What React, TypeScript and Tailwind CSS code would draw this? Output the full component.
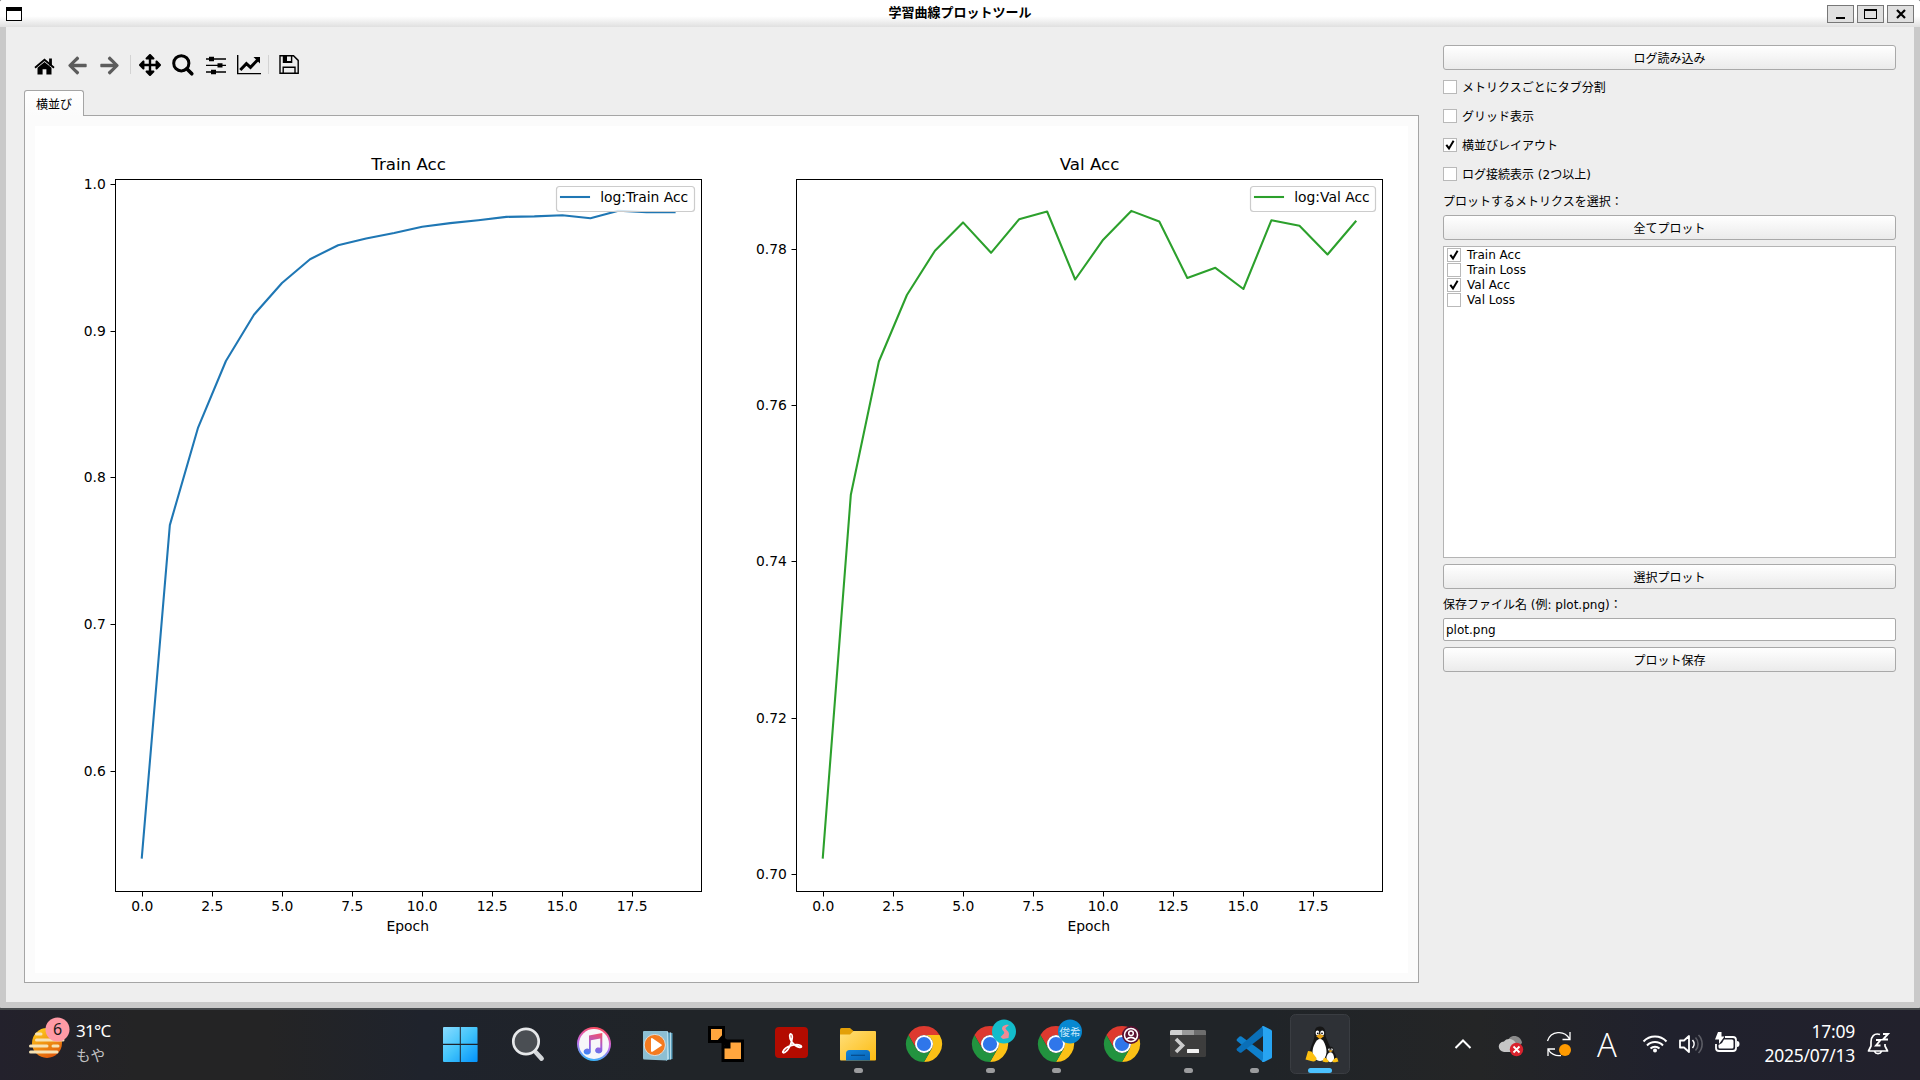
import React from "react";
import { FaArrowLeft, FaArrowRight, FaArrowsAlt } from "react-icons/fa";

const BUTTON =
  "flex h-[25px] w-full shrink-0 items-center justify-center rounded-[3px] border border-[#a9a9a9] bg-linear-to-b from-white to-[#ebebeb] pt-[2px] text-[12px] leading-none text-black";

function Check() {
  return (
    <svg width="12" height="12" viewBox="0 0 12 12" fill="none" stroke="#000" strokeWidth="2">
      <path d="M2.3 5.8 L5 9.4 L9.6 1.8" />
    </svg>
  );
}

function CheckBox({ checked }: { checked?: boolean }) {
  return (
    <span className="flex size-[14px] shrink-0 items-center justify-center border border-[#b9b9b9] bg-white">
      {checked && <Check />}
    </span>
  );
}

function Option({ label, checked }: { label: string; checked?: boolean }) {
  return (
    <label className="flex h-[29px] items-center gap-[5px]">
      <span className="pb-px">
        <CheckBox checked={checked} />
      </span>
      <span className="pt-px leading-none">{label}</span>
    </label>
  );
}

function TitleBar() {
  const btn = "flex h-[18px] w-[27px] items-center justify-center border border-[#777] bg-[#e0e0e0]";
  return (
    <header className="flex h-[27px] shrink-0 items-start bg-linear-to-b from-white from-60% to-[#e0e0e0] pl-[6px] pr-[6px]">
      <div className="w-[87px] pt-[7px]">
        <div className="h-[14px] w-[16px] border border-t-4 border-black bg-white" />
      </div>
      <h1 className="flex-1 pt-[6px] text-center text-[13px] font-bold leading-[14px]">学習曲線プロットツール</h1>
      <div className="flex gap-[3px] pt-[5px]">
        <div className={btn}>
          <div className="mt-[8px] h-[2px] w-[9px] bg-black" />
        </div>
        <div className={btn}>
          <div className="h-[10px] w-[13px] border border-t-2 border-black" />
        </div>
        <div className={btn}>
          <svg width="10" height="10" viewBox="0 0 10 10" stroke="#000" strokeWidth="2.2">
            <path d="M1 1 L9 9 M9 1 L1 9" />
          </svg>
        </div>
      </div>
    </header>
  );
}

function ToolCell({ children }: { children: React.ReactNode }) {
  return <span className="flex h-[26px] w-[33px] items-center justify-center">{children}</span>;
}

function Toolbar() {
  return (
    <div className="flex h-[26px] pl-[4px] text-black">
      <ToolCell>
        <svg width="22" height="24" viewBox="0.5 -0.5 22 24">
          <path d="M1.5 14.2 L11 6.3 L20.5 14.2" fill="none" stroke="#000" strokeWidth="1.9" />
          <path d="M15.6 5 H18.4 V12 H15.6 Z" />
          <path d="M4 14.3 L11 8.5 L18 14.3 V21 H12.9 V15.8 H9.1 V21 H4 Z" />
        </svg>
      </ToolCell>
      <ToolCell>
        <FaArrowLeft className="size-[21px] text-[#5c5c5c]" />
      </ToolCell>
      <ToolCell>
        <FaArrowRight className="mr-[2px] size-[21px] text-[#5c5c5c]" />
      </ToolCell>
      <span className="ml-[3px] mr-[2px] mt-[3px] h-[19px] w-px bg-[#d3d3d3]" />
      <ToolCell>
        <FaArrowsAlt className="size-[22px]" />
      </ToolCell>
      <ToolCell>
        <svg width="24" height="24" viewBox="0 0 24 24" fill="none" stroke="#000">
          <circle cx="10.3" cy="10.3" r="7.6" strokeWidth="3" />
          <path d="M15.8 15.8 L20.8 20.8" strokeWidth="3.6" strokeLinecap="round" />
        </svg>
      </ToolCell>
      <ToolCell>
        <svg width="24" height="24" viewBox="0 0 24 24">
          <path d="M2 6 H22 M2 12.4 H22 M2 19 H22" stroke="#000" strokeWidth="1.4" />
          <path d="M5 3.8 H10 V8.2 H5 Z M13.5 10.2 H18.5 V14.6 H13.5 Z M7 16.8 H12 V21.2 H7 Z" />
        </svg>
      </ToolCell>
      <ToolCell>
        <svg width="26" height="24" viewBox="0 0 26 24">
          <path d="M1.7 2 V20.6 H25" fill="none" stroke="#000" strokeWidth="1.4" />
          <path d="M4.3 17 L10.4 10.6 L14.5 14.3 L21.6 7" fill="none" stroke="#000" strokeWidth="3" />
          <path d="M17.5 4 H24 V10.6 Z" />
        </svg>
      </ToolCell>
      <span className="ml-[3px] mr-[3px] mt-[3px] h-[19px] w-px bg-[#d3d3d3]" />
      <ToolCell>
        <svg width="22" height="24" viewBox="0 0 22 24" fill="none" stroke="#000" strokeWidth="1.4">
          <path d="M2 2.7 H15.5 L20.2 7.4 V20.3 H2 Z" />
          <path d="M5.5 2.7 V9.4 H13.6 V2.7" />
          <path d="M5.6 3 H9 V8 H13 V9.2 H5.6 Z" fill="#000" stroke="none" />
          <path d="M5.2 20 V14.2 H17 V20" />
        </svg>
      </ToolCell>
    </div>
  );
}

type Plot = {
  title: string;
  left: number;
  color: string;
  ys: number[];
  ticks: [string, number][];
  legendX: number;
};

const PLOTS: Plot[] = [
  {
    title: "Train Acc",
    left: 115.5,
    color: "#1f77b4",
    ys: [857.6, 525.1, 428.2, 361, 314.7, 283, 259.2, 245.2, 238.4, 232.9, 226.7, 223.1, 220.2, 216.9, 216.4, 215.2, 218.2, 210.7, 212.3, 212.3],
    ticks: [["1.0", 184.5], ["0.9", 331.5], ["0.8", 477.5], ["0.7", 624.5], ["0.6", 771.5]],
    legendX: 556.5,
  },
  {
    title: "Val Acc",
    left: 796.5,
    color: "#2ca02c",
    ys: [857.6, 494.7, 361.5, 295, 250.7, 222.4, 252.8, 219.3, 211.5, 279.5, 239.7, 210.9, 221.5, 278, 267.8, 289, 220.2, 225.7, 254.5, 221.5],
    ticks: [["0.78", 249.5], ["0.76", 405.5], ["0.74", 561.5], ["0.72", 718.5], ["0.70", 874.5]],
    legendX: 1250.5,
  },
];

const X_TICKS = ["0.0", "2.5", "5.0", "7.5", "10.0", "12.5", "15.0", "17.5"];
const STEP = 28.04;

function Axes({ p }: { p: Plot }) {
  const x0 = p.left + 26.3;
  const right = p.left + 586;
  return (
    <g>
      <text x={p.left + 293} y="170" fontSize="16.67" textAnchor="middle">{p.title}</text>
      {p.ticks.map(([t, y]) => (
        <g key={t}>
          <path d={`M${p.left - 5} ${y} H${p.left}`} stroke="#000" />
          <text x={p.left - 9.7} y={y + 4.5} fontSize="13.89" textAnchor="end">{t}</text>
        </g>
      ))}
      {X_TICKS.map((t, i) => {
        const x = Math.floor(x0 + i * 2.5 * STEP + 0.25) + 0.5;
        return (
          <g key={t}>
            <path d={`M${x} 891.5 V896.5`} stroke="#000" />
            <text x={x - 0.3} y="911" fontSize="13.89" textAnchor="middle">{t}</text>
          </g>
        );
      })}
      <text x={p.left + 292.2} y="931" fontSize="13.89" textAnchor="middle">Epoch</text>
      <polyline
        points={p.ys.map((y, i) => `${x0 + i * STEP},${y}`).join(" ")}
        fill="none"
        stroke={p.color}
        strokeWidth="2.08"
        strokeLinecap="square"
        strokeLinejoin="round"
      />
      <rect x={p.left} y="179.5" width="586" height="712" fill="none" stroke="#000" />
      <rect x={p.legendX} y="186.5" width={right - 7 - p.legendX} height="25" rx="3" fill="#fff" fillOpacity="0.8" stroke="#ccc" strokeWidth="1.2" />
      <path d={`M${p.legendX + 4.5} 197 h28`} stroke={p.color} strokeWidth="2.08" strokeLinecap="square" />
      <text x={p.legendX + 43.7} y="202" fontSize="13.89">{`log:${p.title}`}</text>
    </g>
  );
}

function Figure() {
  return (
    <svg className="block bg-white font-['DejaVu_Sans',sans-serif]" width="1373" height="847" viewBox="35 126 1373 847">
      {PLOTS.map((p) => (
        <Axes key={p.title} p={p} />
      ))}
    </svg>
  );
}

const METRICS: [string, boolean][] = [
  ["Train Acc", true],
  ["Train Loss", false],
  ["Val Acc", true],
  ["Val Loss", false],
];

function SidePanel() {
  return (
    <aside className="flex w-[453px] flex-col pt-[18px] text-[12px] text-black">
      <button className={BUTTON}>ログ読み込み</button>
      <div className="mt-[3px] flex flex-col">
        <Option label="メトリクスごとにタブ分割" />
        <Option label="グリッド表示" />
        <Option label="横並びレイアウト" checked />
        <Option label="ログ接続表示 (2つ以上)" />
      </div>
      <div className="mt-[2px] flex h-[20px] items-center pt-px leading-none">プロットするメトリクスを選択：</div>
      <button className={`${BUTTON} mt-[4px]`}>全てプロット</button>
      <ul className="mt-[6px] h-[312px] border border-[#b4b4b4] bg-white pl-[3px]">
        {METRICS.map(([m, on]) => (
          <li key={m} className="flex h-[15px] items-center gap-[6px] leading-none">
            <CheckBox checked={on} />
            <span className="pt-px">{m}</span>
          </li>
        ))}
      </ul>
      <button className={`${BUTTON} mt-[6px]`}>選択プロット</button>
      <div className="mt-[4px] flex h-[22px] items-center pt-px leading-none">保存ファイル名 (例: plot.png)：</div>
      <div className="mt-[3px] flex h-[23px] items-center rounded-[2px] border border-[#a9a9a9] bg-white pl-[2px] leading-none">plot.png</div>
      <button className={`${BUTTON} mt-[6px]`}>プロット保存</button>
    </aside>
  );
}

function Dock({ children, state }: { children: React.ReactNode; state?: "open" | "active" }) {
  return (
    <svg className="shrink-0" width="66" height="70" viewBox="-33 -34 66 70">
      {state === "active" && <rect x="-29.5" y="-29.5" width="59" height="59" rx="5" fill="#2e3136" stroke="#3a3d42" />}
      {children}
      {state === "open" && <rect x="-4" y="24" width="9" height="5" rx="2.5" fill="#9b9c9e" />}
      {state === "active" && <rect x="-12" y="24" width="24" height="5" rx="2.5" fill="#4cc2ff" />}
    </svg>
  );
}

function Chrome() {
  return (
    <g>
      <path d="M-15.59 -9 A18 18 0 0 1 15.59 -9 L0 -9 A9 9 0 0 0 -7.79 4.5 Z" fill="#de3a2f" />
      <path d="M15.59 -9 A18 18 0 0 1 0 18 L7.79 4.5 A9 9 0 0 0 0 -9 Z" fill="#fbc116" />
      <path d="M0 18 A18 18 0 0 1 -15.59 -9 L-7.79 4.5 A9 9 0 0 0 7.79 4.5 Z" fill="#22933f" />
      <circle r="9" fill="#fff" />
      <circle r="7.1" fill="#2f76ea" />
    </g>
  );
}

function Penguin() {
  return (
    <g>
      <path d="M0 -17.5 C5 -17.5 5.5 -13 5.5 -9 C6 -4 11 1 11 9 C11 15 7 17 1 17 C-5 17 -10 15 -10 9 C-10 2 -5.5 -3 -5.5 -9 C-5.5 -14 -5 -17.5 0 -17.5 Z" fill="#161616" />
      <path d="M0 -5 C4 -5 6.5 3 6.5 8 C6.5 14 4 17 0 17 C-4 17 -7.5 13 -7.5 8 C-7.5 3 -4 -5 0 -5 Z" fill="#fff" />
      <ellipse cx="-2.6" cy="-11" rx="1.8" ry="2.4" fill="#fff" />
      <ellipse cx="2.2" cy="-11" rx="2" ry="2.5" fill="#fff" />
      <circle cx="-2.2" cy="-10.7" r="0.9" fill="#111" />
      <circle cx="2" cy="-10.7" r="0.9" fill="#111" />
      <path d="M-4 -8 L0 -10 L4.2 -8 L0 -4.8 Z" fill="#e8a317" />
      <path d="M-12 7 L-8.5 7.5 L-3.5 14 C-3 17 -6 18 -9 17 L-14.5 15.5 Z" fill="#fdc010" />
    </g>
  );
}

function Terminal() {
  return (
    <g>
      <rect x="-18" y="-14" width="36" height="27" rx="1.5" fill="#3d3d3d" />
      <path d="M-18 -9 V-12.5 Q-18 -14 -16.5 -14 H-6 V-9 Z" fill="#cfcfcf" />
      <rect x="-6" y="-14" width="12" height="5" fill="#9a9a9a" />
      <path d="M6 -14 H16.5 Q18 -14 18 -12.5 V-9 H6 Z" fill="#6d6d6d" />
      <path d="M-12 -5 L-5.5 1.5 L-12 8" fill="none" stroke="#ccc" strokeWidth="3.6" />
      <rect x="-1" y="5" width="12" height="4" rx="0.5" fill="#f2f2f2" />
    </g>
  );
}

function DockIcons() {
  return (
    <div className="flex">
      <Dock>
        <defs>
          <linearGradient id="win" gradientUnits="userSpaceOnUse" x1="-18" y1="-17" x2="16" y2="18">
            <stop offset="0" stopColor="#8adcff" />
            <stop offset="0.5" stopColor="#42c4fb" />
            <stop offset="1" stopColor="#0493fb" />
          </linearGradient>
        </defs>
        <path
          transform="translate(-1 0)"
          d="M-18 -16 q0 -1 1 -1 H-1.2 V-.3 H-18 Z M-.2 -17 H15.5 q1 0 1 1 V-.3 H-.2 Z M-18 .9 H-1.2 V18 H-17 q-1 0 -1 -1 Z M-.2 .9 H16.6 V17 q0 1 -1 1 H-.2 Z"
          fill="url(#win)"
        />
      </Dock>
      <Dock>
        <path d="M8 8.5 L13.6 14.6" stroke="#d4d7da" strokeWidth="4.6" strokeLinecap="round" />
        <circle cx="-2" cy="-2.5" r="12.7" fill="#4a4e53" stroke="#e6e8ea" strokeWidth="2.7" />
      </Dock>
      <Dock>
        <defs>
          <linearGradient id="ring" x1="0.6" y1="0" x2="0.4" y2="1">
            <stop offset="0" stopColor="#fb4b5c" />
            <stop offset="0.5" stopColor="#c86be8" />
            <stop offset="1" stopColor="#35b6fa" />
          </linearGradient>
          <linearGradient id="note" gradientUnits="userSpaceOnUse" x1="4" y1="-11" x2="-3" y2="11">
            <stop offset="0" stopColor="#f2506c" />
            <stop offset="0.55" stopColor="#a45bd8" />
            <stop offset="1" stopColor="#3f86f5" />
          </linearGradient>
        </defs>
        <circle r="17" fill="url(#ring)" />
        <circle r="15" fill="#f7f7f9" />
        <path
          d="M-5 -8.5 L8.3 -11 V6.5 A3.6 3 0 1 1 6.3 3.7 V-5.5 L-3.2 -3.7 V8 A3.6 3 0 1 1 -5 5 Z"
          fill="url(#note)"
        />
      </Dock>
      <Dock>
        <path d="M6 -12 L12.5 -11 V15 L6 16.5 Z" fill="#5c9fbd" />
        <path d="M6 -12.7 H8 L9 15 L6 16.5 Z M10 -11.5 H11 V15.5 H10 Z" fill="#b5dcea" />
        <path d="M-17 -12 Q-17 -13 -16 -13 H7 V16.5 L-16 15.5 Q-17 15.5 -17 14 Z" fill="#8dbfd3" />
        <circle cx="-5.2" cy="1" r="10.6" fill="#f47b20" stroke="#d8dfe0" strokeWidth="1" />
        <path d="M-9 -5 Q-9 -6.5 -7.5 -5.8 L1.5 0.4 Q2.2 1 1.5 1.7 L-7.5 7.7 Q-9 8.2 -9 7 Z" fill="#fff" />
      </Dock>
      <Dock>
        <rect x="-16.5" y="-16.5" width="14" height="14" fill="#ffa63e" stroke="#000" strokeWidth="3" />
        <rect x="-3" y="-3" width="19.5" height="19.5" fill="#ffa63e" stroke="#000" strokeWidth="3" />
        <path d="M-6 -6.5 L1.5 0.5" stroke="#000" strokeWidth="6" />
        <path d="M4.5 -4 V4.5 H-4.5 Z" />
      </Dock>
      <Dock>
        <rect x="-17" y="-17" width="33" height="31" rx="4" fill="#b30b00" />
        <path
          d="M-9 7.5 C-7 2.5 4 -1 8.5 1.5 C12 4 5 5 -.5 -2.5 C-3 -6.5 -2.5 -10.5 -1 -10 C2 -9 -1 3 -5.5 7 C-7.5 9.5 -10 9 -9 7.5 Z"
          fill="none"
          stroke="#fff"
          strokeWidth="1.8"
        />
      </Dock>
      <Dock state="open">
        <defs>
          <linearGradient id="folder" x1="0" y1="0" x2="1" y2="1">
            <stop offset="0" stopColor="#ffdf7a" />
            <stop offset="1" stopColor="#fdbb10" />
          </linearGradient>
          <linearGradient id="drawer" x1="0" y1="0" x2="1" y2="1">
            <stop offset="0" stopColor="#1485dc" />
            <stop offset="1" stopColor="#0662b4" />
          </linearGradient>
        </defs>
        <path d="M-18 -14.5 Q-18 -16 -16.5 -16 H-8 L-4 -12.5 V-7 H-18 Z" fill="#e3a008" />
        <path d="M-18 -9.5 H-8 L-4.5 -13 H17 Q18 -13 18 -12 V15.5 Q18 16.5 17 16.5 H-17 Q-18 16.5 -18 15.5 Z" fill="url(#folder)" />
        <path d="M-12 16.5 V9.5 Q-12 6 -8.5 6 H8.5 Q12 6 12 9.5 V16.5 Z" fill="url(#drawer)" />
        <path d="M-7 11.3 H7" stroke="#064a8a" strokeWidth="1.2" />
      </Dock>
      <Dock>
        <Chrome />
      </Dock>
      <Dock state="open">
        <Chrome />
        <circle cx="14" cy="-12.5" r="12" fill="#13bccb" />
        <path d="M19 -19 C15 -20 10.5 -17 12.5 -14 C14 -12.5 14.5 -12 14 -10.5 L10.5 -7 L13 -5 L18.500 -6 L19 -10 C19 -13 15.500 -14 15.500 -16 Z" fill="#f08a94" />
      </Dock>
      <Dock state="open">
        <Chrome />
        <circle cx="14" cy="-12.5" r="12" fill="#0788d1" />
        <text x="14" y="-8.5" fontSize="10.5" fill="#c9e8fb" textAnchor="middle">俊希</text>
      </Dock>
      <Dock>
        <Chrome />
        <circle cx="9" cy="-9" r="9" fill="#5a1030" />
        <g fill="none" stroke="#fff" strokeWidth="1.5">
          <circle cx="9" cy="-9" r="6.5" />
          <circle cx="9" cy="-10.7" r="2.3" />
          <path d="M4.5 -4.8 Q9 -8.5 13.5 -4.8" />
        </g>
      </Dock>
      <Dock state="open">
        <Terminal />
      </Dock>
      <Dock state="open">
        <path d="M-17 -5 L-14.5 -7.5 Q-13.5 -8 -12.5 -7.5 L13 11 L9 18 L-17 -3 Q-18 -4 -17 -5 Z" fill="#0f80cc" />
        <path d="M-17 4.5 L9 -18 L13 -11 L-12.5 8.5 Q-13.5 9 -14.5 8.5 L-17 6.5 Q-18 5.5 -17 4.5 Z" fill="#0a6fb8" />
        <path d="M8 -17.5 Q8.8 -18.3 10 -17.8 L17 -14.3 Q18 -13.8 18 -12.8 V13 Q18 14 17 14.5 L10 18 Q8.8 18.3 8 17.5 L9 15 V-15 Z" fill="#27a4f2" />
      </Dock>
      <Dock state="active">
        <Penguin />
        <g transform="translate(10.5 10.5) scale(0.55 0.45)">
          <Penguin />
          <path d="M12 7 L8.5 7.5 L3.5 14 C3 17 6 18 9 17 L14.5 15.5 Z" fill="#fdc010" />
        </g>
      </Dock>
    </div>
  );
}

function Tray({ wide, children }: { wide?: boolean; children: React.ReactNode }) {
  return (
    <svg className={wide ? "h-[70px] w-[48px]" : "h-[70px] w-[36px]"} viewBox={wide ? "-24 -34 48 70" : "-18 -34 36 70"} fill="none" stroke="#fff" strokeWidth="1.6">
      {children}
    </svg>
  );
}

function Taskbar() {
  return (
    <footer className="flex h-[72px] shrink-0 border-t-2 border-[#45484b] bg-[linear-gradient(90deg,#23212c_0%,#242425_7%,#242425_14%,#1f232c_22%,#202428_35%,#202428_66%,#242526_77%,#20212d_87%,#22212c_100%)] font-['Noto_Sans','Noto_Sans_CJK_JP',sans-serif] text-white">
      <div className="flex w-[429px] pl-[27px]">
        <svg width="44" height="70" viewBox="27 1010 44 70">
          <defs>
            <linearGradient id="sun" x1="0.2" y1="0" x2="0.7" y2="1">
              <stop offset="0" stopColor="#ffcf1a" />
              <stop offset="1" stopColor="#e0560b" />
            </linearGradient>
          </defs>
          <circle cx="47" cy="1043" r="15" fill="url(#sun)" />
          <g stroke="#f6e2b4" strokeWidth="3" strokeLinecap="round">
            <path d="M36.5 1034 H41 M36.5 1040 H63 M30.5 1046 H47 M53 1046 H58 M30.5 1052 H57" />
          </g>
          <circle cx="57.5" cy="1029.5" r="12" fill="#ff9aa5" />
          <text x="57.5" y="1035" fontSize="16" textAnchor="middle" fill="#1b1b1b">6</text>
        </svg>
        <div className="flex flex-col pl-[5px] pt-[9px]">
          <span className="text-[17px] leading-[24px] tracking-[-0.7px]">31°C</span>
          <span className="pt-px text-[14.5px] leading-[23px] text-[#c3c3c5]">もや</span>
        </div>
      </div>
      <DockIcons />
      <div className="ml-[86px] flex">
        <Tray wide>
          <path d="M-7.5 4 L0 -3.5 L7.5 4" strokeWidth="2" />
        </Tray>
        <Tray wide>
          <g stroke="none">
            <path d="M-3 -3 C-2 -10 10 -10 11 -1 L6 4 Z" fill="#8b8b8b" />
            <path d="M-7 8 C-14 7 -14 -2 -7 -2.5 C-4 -7 4 -5 5 0 L5 8 Z" fill="#c6c6c6" />
            <circle cx="5.5" cy="5.5" r="6.7" fill="#d9232e" />
          </g>
          <path d="M2.5 2.5 L8.5 8.5 M8.5 2.5 L2.5 8.5" strokeWidth="1.8" />
        </Tray>
        <Tray wide>
          <path d="M-11.5 -3 A12 12 0 0 1 10.5 -5 M11 -12 V-4.5 H3.5 M-11 12 V5 H-4 M-11 5 A12 12 0 0 0 2 11.5" strokeWidth="1.3" />
          <circle cx="6" cy="6" r="6" fill="#ff9a00" stroke="none" />
        </Tray>
        <span className="flex w-[48px] items-center justify-center pb-[2px] font-['Open_Sans',sans-serif] text-[33px] font-light leading-none">A</span>
        <div className="ml-[6px] flex">
          <Tray>
            <path d="M-11.5 -2.5 A16 16 0 0 1 11.5 -2.5 M-8 1.5 A11 11 0 0 1 8 1.5 M-4.5 4.5 A6.5 6.5 0 0 1 4.5 4.5" strokeWidth="2" />
            <circle cy="6.5" r="2" fill="#fff" stroke="none" />
          </Tray>
          <Tray>
            <path d="M-11 -3.5 H-7 L-2 -8 V8 L-7 3.5 H-11 Z" strokeWidth="1.8" strokeLinejoin="round" />
            <path d="M1.5 -4 A6 6 0 0 1 1.5 4" />
            <path d="M4.5 -6.5 A9.5 9.5 0 0 1 4.5 6.5 M7.5 -9 A13 13 0 0 1 7.5 9" stroke="#5d5e66" />
          </Tray>
          <Tray>
            <path d="M-2 -7 H6 Q9 -7 9 -4 V4 Q9 7 6 7 H-8 Q-11 7 -11 4 V0" strokeWidth="1.8" />
            <path d="M-3 -4.5 H5 Q6.5 -4.5 6.5 -3 V3 Q6.5 4.5 5 4.5 H-7 Q-8.5 4.5 -8.5 3 V1 L-5 -1 Z M10 -3 Q12.5 -3 12.5 0 Q12.5 3 10 3 Z" fill="#fff" stroke="none" />
            <path d="M-9 -12 H-5.5 V-7.5 H-2.5 L-8 0 V-4.5 H-12 Z" fill="#fff" stroke="none" />
          </Tray>
        </div>
        <div className="flex w-[110px] flex-col items-end pt-[9px] text-[17.5px] leading-[24px] tracking-[-0.25px]">
          <span>17:09</span>
          <span>2025/07/13</span>
        </div>
        <svg className="ml-[9px]" width="28" height="70" viewBox="-14 -34 28 70" fill="none" stroke="#fff" strokeWidth="1.7">
          <path d="M2 -9.5 C-4 -11.5 -7 -7 -7 -2 V2 L-9.5 7 H9.5 L7 2 V0 M-3.5 7.5 A3.8 3.5 0 0 0 3.5 7.5" strokeLinejoin="round" />
          <path d="M5 -10 H10 L5 -4.5 H10 M-2 -4 H2.5 L-2 1.5 H2.5" strokeWidth="1.9" />
        </svg>
      </div>
    </footer>
  );
}

export default function App() {
  return (
    <div className="flex h-[1080px] w-[1920px] flex-col overflow-hidden bg-[#202428] font-['DejaVu_Sans','Noto_Sans_CJK_JP',sans-serif] text-black">
      <div className="flex h-[1008px] shrink-0 flex-col overflow-hidden rounded-[2px] bg-[#eee]">
        <TitleBar />
        <div className="flex flex-1 border-6 border-t-0 border-[#c9c9c9] bg-[#eee] pl-[18px]">
          <main className="flex w-[1395px] flex-col pt-[25px]">
            <Toolbar />
            <div className="mt-[12px] flex h-[25px]">
              <div className="z-10 -mb-px flex h-[26px] w-[60px] items-center justify-center rounded-t-[3px] border border-b-0 border-[#a5a5a5] bg-linear-to-b from-white to-[#fbfbfb] pt-[2px] text-[12px] leading-none">
                横並び
              </div>
            </div>
            <div className="h-[868px] border border-[#a5a5a5] bg-[#fbfbfb] pl-[10px] pt-[10px]">
              <Figure />
            </div>
          </main>
          <div className="ml-[24px]">
            <SidePanel />
          </div>
        </div>
      </div>
      <Taskbar />
    </div>
  );
}
